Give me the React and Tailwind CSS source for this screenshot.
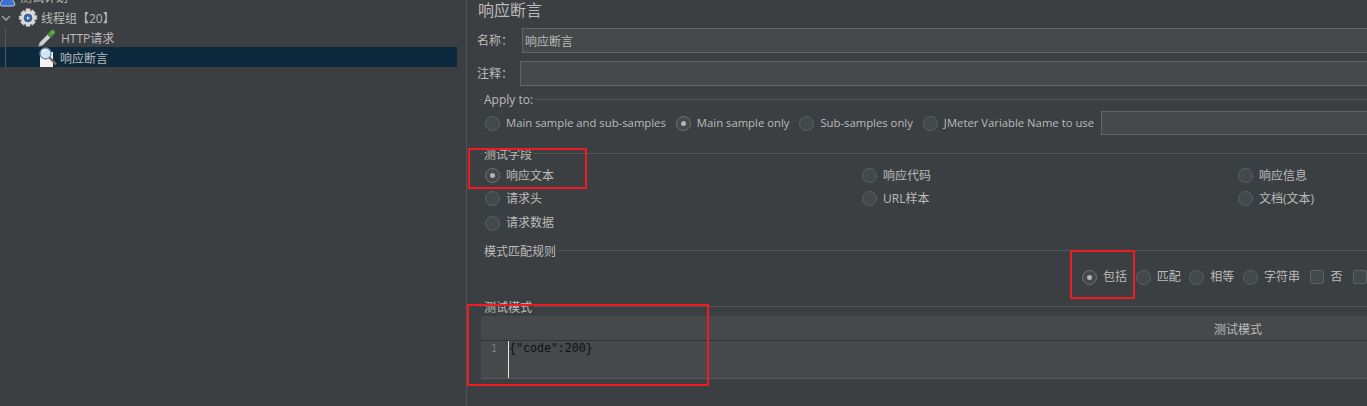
import React from "react";

const CJK = "font-['Open_Sans','Noto_Sans_CJK_SC',sans-serif]";

function Radio({ label, checked, small }) {
  return (
    <div className="flex items-center gap-[6px] whitespace-nowrap">
      <span className={`flex h-[15px] w-[15px] shrink-0 items-center justify-center rounded-full border bg-[#43484a] ${checked ? "border-[#6f7374]" : "border-[#5e6162]"}`}>
        {checked && <span className="h-[5px] w-[5px] rounded-full bg-[#b4b4b4]" />}
      </span>
      <span className={small ? "text-[11.3px]" : ""}>{label}</span>
    </div>
  );
}

function Checkbox({ label }) {
  return (
    <div className="flex items-center gap-[6px] whitespace-nowrap">
      <span className="h-[14px] w-[14px] shrink-0 rounded-[2px] border border-[#5e6162] bg-[#43484a]" />
      {label && <span>{label}</span>}
    </div>
  );
}

function Legend({ text, className, labelClass = "pt-[3px]" }) {
  return (
    <div className={`flex items-center ${className}`}>
      <span className="h-px w-[3px] bg-[#535658]" />
      <span className={`px-[2px] leading-none text-[#bbbbbb] ${labelClass}`}>{text}</span>
      <span className="h-px flex-1 bg-[#535658]" />
    </div>
  );
}

function Flask() {
  return (
    <svg width="18" height="18" viewBox="0 0 18 18">
      <path d="M6 1h5v5l5 9q0 2-2 2H3q-2 0-2-2l5-9z" fill="#3f6fd0" stroke="#b8c8e8" />
    </svg>
  );
}

function Gear() {
  return (
    <svg width="20" height="20" viewBox="0 0 20 20">
      <path d="M8 0.500h4l.5 2.500 2.200-1.200 2.900 2.900-1.200 2.200 2.600.6v4l-2.600.6 1.200 2.200-2.900 2.900-2.200-1.200-.5 2.500H8l-.5-2.500-2.200 1.200-2.900-2.900 1.200-2.200-2.600-.6V8l2.600-.6-1.200-2.200 2.900-2.900 2.200 1.200z" fill="#d9d9d9" stroke="#8c8c8c" strokeWidth="0.5" />
      <circle cx="10" cy="10" r="5" fill="#5a6a7e" stroke="#f0f0f0" strokeWidth="1" />
      <circle cx="10" cy="10" r="3.500" fill="#2f64b4" />
      <path d="M9 8.200l2.800 1.800L9 11.800z" fill="#e8eef6" />
    </svg>
  );
}

function Pipette() {
  return (
    <svg width="20" height="18" viewBox="0 0 20 18">
      <path d="M1.500 17.500l1-4 8-8 3 3-8 8z" fill="#cfcfcf" stroke="#6f6f6f" strokeWidth="0.7" />
      <path d="M10.500 5l3.500-3.500q2-1.500 3.500 0t0 3.500L14 8.500z" fill="#4f9a3c" stroke="#2f6a25" strokeWidth="0.5" />
      <path d="M14.500 3l2 0" stroke="#a6dd90" strokeWidth="1" />
    </svg>
  );
}

function Magnifier() {
  return (
    <svg width="20" height="20" viewBox="0 0 20 20">
      <rect x="2" y="5" width="13" height="15" fill="#f2f2f2" />
      <circle cx="7.500" cy="6.500" r="5.500" fill="#cfe6f7" stroke="#6d8aa5" strokeWidth="1.300" />
      <path d="M4.500 5q1-2.500 4-2.500" stroke="#fff" strokeWidth="1.200" fill="none" />
      <path d="M11.500 10.500l6.500 7" stroke="#7a6a55" strokeWidth="2.400" />
    </svg>
  );
}

function Tree() {
  return (
    <div className="flex h-full w-[457px] shrink-0 flex-col text-[12px] text-[#bbbbbb]">
      <div className="relative h-[8px] overflow-hidden">
        <div className="absolute bottom-0 left-0 flex h-[20px] items-center">
          <span className="ml-[-1px] w-[20px]"><Flask /></span>
          <span className="ml-[1px]">测试计划</span>
        </div>
      </div>
      <div className="flex h-[20px] items-center">
        <svg width="10" height="10" viewBox="0 0 10 10" className="ml-px shrink-0">
          <path d="M1 3l4 4 4-4" stroke="#9a9a9a" strokeWidth="1.600" fill="none" />
        </svg>
        <span className="ml-[7px]"><Gear /></span>
        <span className="ml-[3px] pt-[1px]">线程组【20】</span>
      </div>
      <div className="relative flex h-[19px] items-center">
        <span className="ml-[37px]"><Pipette /></span>
        <span className="ml-[4px] pt-[2px]">HTTP请求</span>
        <span className="absolute bottom-0 left-[5px] top-0 w-px bg-[#55585a]" />
      </div>
      <div className="relative flex h-[20px] items-center bg-[#0d293e]">
        <span className="ml-[38px] flex"><Magnifier /></span>
        <span className="ml-[2px] pt-[4px]">响应断言</span>
        <span className="absolute bottom-0 left-[5px] top-0 w-px bg-[#55585a]" />
      </div>
    </div>
  );
}

export default function App() {
  return (
    <div className={`relative flex h-[406px] w-[1367px] overflow-hidden bg-[#3c3f41] text-[12px] text-[#bbbbbb] ${CJK}`}>
      <Tree />
      <div className="ml-px w-[8px] shrink-0" />
      <div className="min-w-0 flex-1 border-l border-[#515456] pl-[10px]">
        <div className="pl-px text-[16px] leading-[20px]">响应断言</div>

        <div className="mt-[8px] flex h-[25px] items-center">
          <span className="w-[45px] shrink-0 pt-px">名称：</span>
          <div className="h-[25px] flex-1 border border-r-0 border-[#646464] bg-[#45494a] pl-[2px] leading-[25px]">响应断言</div>
        </div>
        <div className="mt-[8px] flex h-[25px] items-center">
          <span className="w-[43px] shrink-0 pt-px">注释：</span>
          <div className="h-[25px] flex-1 border border-r-0 border-[#646464] bg-[#45494a]" />
        </div>

        <Legend text="Apply to:" labelClass="pt-[2px]" className="mt-[7px] ml-[2px] h-[12px]" />
        <div className="mt-[6px] flex h-[24px] items-center pl-[8px]">
          <Radio small label="Main sample and sub-samples" />
          <span className="w-[10px]" />
          <Radio small label="Main sample only" checked />
          <span className="w-[10px]" />
          <Radio small label="Sub-samples only" />
          <span className="w-[10px]" />
          <Radio small label="JMeter Variable Name to use" />
          <div className="ml-[7px] h-[24px] flex-1 border border-r-0 border-[#646464] bg-[#45494a]" />
        </div>

        <Legend text="测试字段" className="mt-[12px] ml-[2px] h-[12px]" />
        <div className="mt-[5px] grid grid-cols-[377px_376px_1fr] pl-[8px]">
          <div className="flex h-[23px] items-center"><Radio label="响应文本" checked /></div>
          <div className="flex h-[23px] items-center"><Radio label="响应代码" /></div>
          <div className="flex h-[23px] items-center"><Radio label="响应信息" /></div>
          <div className="flex h-[23px] items-center"><Radio label="请求头" /></div>
          <div className="flex h-[23px] items-center"><Radio label="URL样本" /></div>
          <div className="flex h-[23px] items-center"><Radio label="文档(文本)" /></div>
          <div className="flex h-[26px] items-center"><Radio label="请求数据" /></div>
        </div>

        <Legend text="模式匹配规则" className="mt-[8px] ml-[2px] h-[12px]" />
        <div className="mt-[9px] flex h-[24px] items-center pl-[605px]">
          <Radio label="包括" checked />
          <span className="w-[9px]" />
          <Radio label="匹配" />
          <span className="w-[9px]" />
          <Radio label="相等" />
          <span className="w-[9px]" />
          <Radio label="字符串" />
          <span className="w-[11px]" />
          <Checkbox label="否" />
          <span className="w-[11px]" />
          <Checkbox />
        </div>

        <Legend text="测试模式" className="mt-[11px] ml-[2px] h-[12px]" />
        <div className="ml-[4px] mt-[4px] w-[1514px]">
          <div className="flex h-[25px] items-center justify-center border-b border-[#323232] bg-[#45494a] pt-[4px]">测试模式</div>
          <div className="flex h-[38px] border-b border-[#565a5c] bg-[#45494a]">
            <span className="w-[27px] shrink-0 pt-[1px] pl-[10px] font-['DejaVu_Sans_Mono',monospace] text-[10px] leading-[14px] text-[#7a7e80]">1</span>
            <span className="w-px shrink-0 bg-[#e6e6e6]" />
            <span className="pt-[1px] font-['DejaVu_Sans_Mono',monospace] text-[11.6px] leading-[13px] text-[#0e1114]">{'{"code":200}'}</span>
          </div>
        </div>
      </div>

      <div className="pointer-events-none absolute left-[468px] top-[148px] h-[41px] w-[119px] border-2 border-[#ed1c24]" />
      <div className="pointer-events-none absolute left-[1070px] top-[250px] h-[49px] w-[65px] border-2 border-[#ed1c24]" />
      <div className="pointer-events-none absolute left-[467px] top-[304px] h-[82px] w-[242px] border-2 border-[#ed1c24]" />
    </div>
  );
}
